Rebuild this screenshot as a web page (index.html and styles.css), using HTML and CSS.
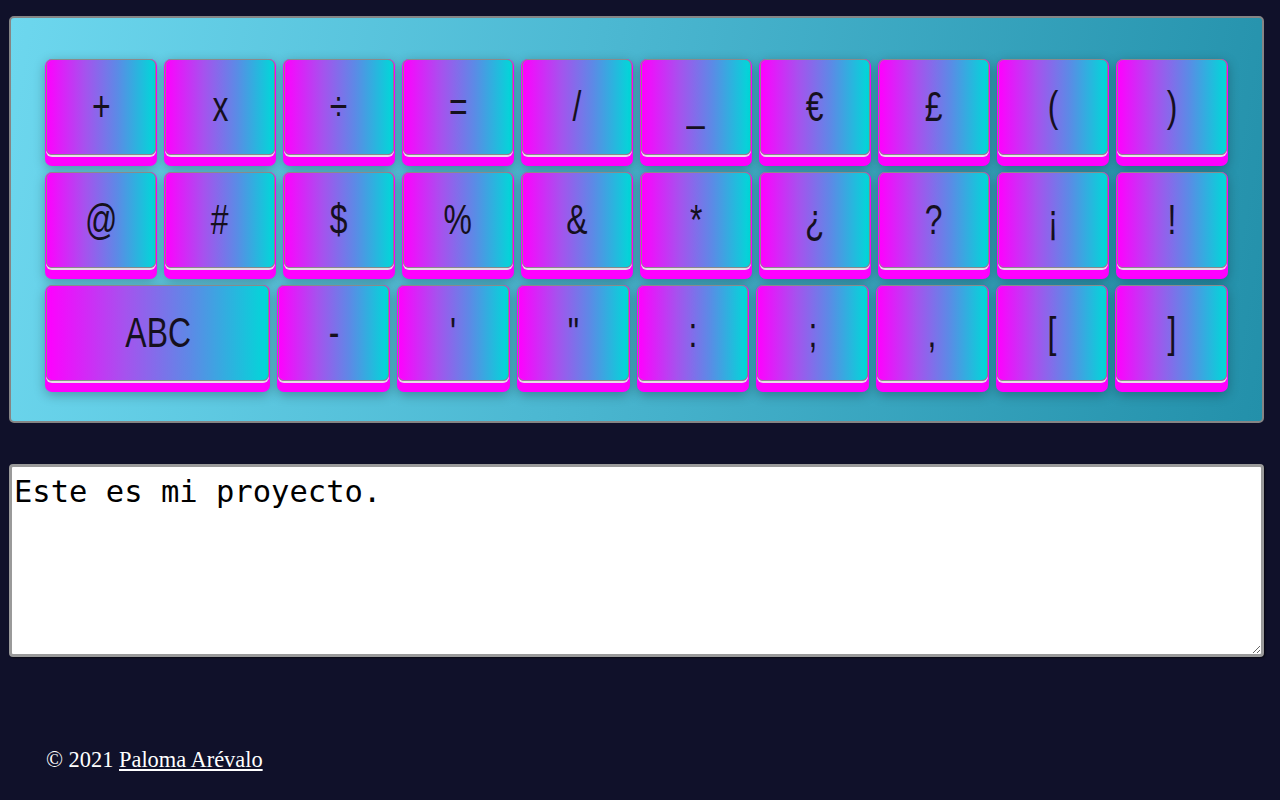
FILE: index.html
```html
<!DOCTYPE html>
<html lang="es">
<head>
<meta charset="utf-8">
<title>Teclado</title>
<link rel="stylesheet" href="styles.css">
</head>
<body>
<div class="page">
  <div class="keyboard">
    <div class="row">
      <button class="key"><span class="face"><span class="glyph">+</span></span></button>
      <button class="key"><span class="face"><span class="glyph">x</span></span></button>
      <button class="key"><span class="face"><span class="glyph">÷</span></span></button>
      <button class="key"><span class="face"><span class="glyph">=</span></span></button>
      <button class="key"><span class="face"><span class="glyph">/</span></span></button>
      <button class="key"><span class="face"><span class="glyph">_</span></span></button>
      <button class="key"><span class="face"><span class="glyph">€</span></span></button>
      <button class="key"><span class="face"><span class="glyph">£</span></span></button>
      <button class="key"><span class="face"><span class="glyph">(</span></span></button>
      <button class="key"><span class="face"><span class="glyph">)</span></span></button>
    </div>
    <div class="row">
      <button class="key"><span class="face"><span class="glyph">@</span></span></button>
      <button class="key"><span class="face"><span class="glyph">#</span></span></button>
      <button class="key"><span class="face"><span class="glyph">$</span></span></button>
      <button class="key"><span class="face"><span class="glyph">%</span></span></button>
      <button class="key"><span class="face"><span class="glyph">&amp;</span></span></button>
      <button class="key"><span class="face"><span class="glyph">*</span></span></button>
      <button class="key"><span class="face"><span class="glyph">¿</span></span></button>
      <button class="key"><span class="face"><span class="glyph">?</span></span></button>
      <button class="key"><span class="face"><span class="glyph">¡</span></span></button>
      <button class="key"><span class="face"><span class="glyph">!</span></span></button>
    </div>
    <div class="row">
      <button class="key wide"><span class="face"><span class="glyph">ABC</span></span></button>
      <button class="key"><span class="face"><span class="glyph">-</span></span></button>
      <button class="key"><span class="face"><span class="glyph">'</span></span></button>
      <button class="key"><span class="face"><span class="glyph">"</span></span></button>
      <button class="key"><span class="face"><span class="glyph">:</span></span></button>
      <button class="key"><span class="face"><span class="glyph">;</span></span></button>
      <button class="key"><span class="face"><span class="glyph">,</span></span></button>
      <button class="key"><span class="face"><span class="glyph">[</span></span></button>
      <button class="key"><span class="face"><span class="glyph">]</span></span></button>
    </div>
  </div>
  <textarea class="output">Este es mi proyecto.</textarea>
  <p class="footer">© 2021 <a href="#">Paloma Arévalo</a></p>
</div>
</body>
</html>
```
FILE: styles.css
```css
html, body {
  margin: 0;
  padding: 0;
  background: #10112a;
}

.page {
  padding: 16px 16px 0 9px;
}

.keyboard {
  box-sizing: border-box;
  width: 1255px;
  height: 407px;
  padding: 41px 34px 29px;
  border: 2px solid #858585;
  border-radius: 5px;
  background: linear-gradient(100deg, #6dd7ee 0%, #4cb8d2 45%, #2390aa 100%);
  display: flex;
  flex-direction: column;
  gap: 6px;
}

.row {
  display: flex;
  gap: 7px;
}

.key {
  flex: 1 1 0;
  min-width: 0;
  margin: 0;
  padding: 0 0 11px;
  border: none;
  border-radius: 7px;
  background: #ff00ff;
  box-shadow: 0 3px 12px rgba(0, 0, 0, 0.28);
  cursor: pointer;
  font: inherit;
  display: block;
}

.key.wide {
  flex: 2 1 0;
}

.face {
  display: flex;
  align-items: center;
  justify-content: center;
  box-sizing: border-box;
  height: 96px;
  margin: 0 1px;
  border: 1px solid #8a8a8a;
  border-radius: 6px;
  background: linear-gradient(to right, #ff00ff 0%, #a652ee 35%, #5c8ae6 65%, #00d8d8 100%);
  box-shadow: 0 2px 0 #e6dde6;
}

.glyph {
  display: inline-block;
  font-family: "Liberation Sans", Arial, sans-serif;
  font-size: 42px;
  color: #15101e;
  transform: scaleX(0.76);
}

.output {
  display: block;
  box-sizing: border-box;
  width: 1255px;
  height: 193px;
  margin: 41px 0 0;
  padding: 7px 2px 2px;
  border: 3px solid #9a9a9a;
  border-radius: 4px;
  box-shadow: 1px 1px 2px rgba(0, 0, 0, 0.6);
  background: #fff;
  color: #000;
  font-family: "DejaVu Sans Mono", "Liberation Mono", monospace;
  font-size: 30.5px;
  line-height: 1.15;
  resize: both;
}

.footer {
  margin: 90px 0 0;
  padding-left: 37px;
  font-family: "Liberation Serif", "Times New Roman", serif;
  font-size: 22.4px;
  color: #fff;
}

.footer a {
  color: #fff;
}
```
